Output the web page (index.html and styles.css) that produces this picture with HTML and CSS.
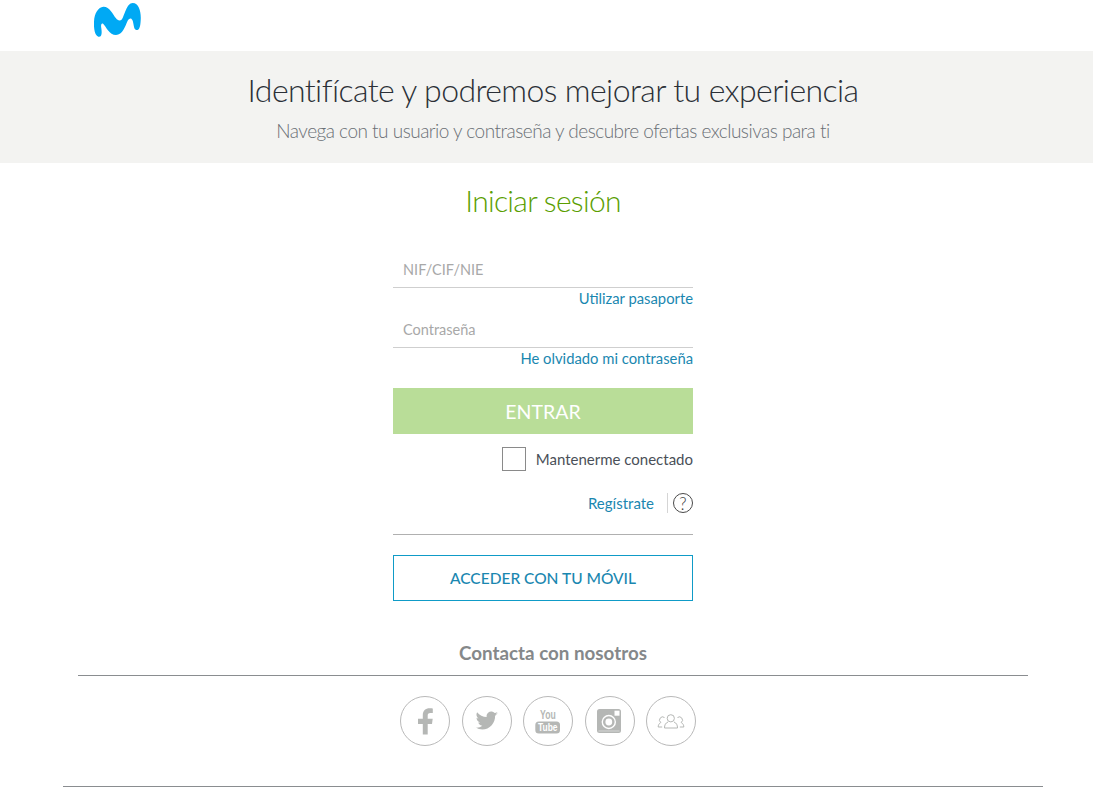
FILE: index.html
```html
<!DOCTYPE html>
<html lang="es">
<head>
<meta charset="utf-8">
<title>Iniciar sesión</title>
<link rel="stylesheet" href="styles.css">
</head>
<body>
<header class="topbar">
  <svg class="logo" viewBox="72 6 144 105" width="48" height="35" aria-hidden="true">
    <path d="M85 110C74 106 71 85 72 65C73 38 85 22 100 20C118 19 128 42 138 55C143 62 150 64 156 58C163 48 170 9 188 9C208 9 214 38 212 62C211 80 208 91 199 90C190 89 192 70 187 60C184 53 178 54 173 62C165 80 158 104 138 105C118 105 108 80 100 72C94 68 92 75 94 85C96 98 96 112 85 110Z" fill="#00a9f4"/>
  </svg>
</header>
<section class="banner">
  <h1 class="banner-title">Identifícate y podremos mejorar tu experiencia</h1>
  <p class="banner-sub">Navega con tu usuario y contraseña y descubre ofertas exclusivas para ti</p>
</section>
<main class="login">
  <h2 class="login-title">Iniciar sesión</h2>
  <form class="form">
    <input class="field" type="text" placeholder="NIF/CIF/NIE">
    <a class="link link-right" href="#">Utilizar pasaporte</a>
    <input class="field" type="password" placeholder="Contraseña">
    <a class="link link-right" href="#">He olvidado mi contraseña</a>
    <button class="submit" type="button">ENTRAR</button>
    <label class="keep">
      <span class="check"></span>
      <span>Mantenerme conectado</span>
    </label>
    <div class="register">
      <a class="link" href="#">Regístrate</a>
      <span class="help">?</span>
    </div>
    <hr class="divider">
    <a class="mobile" href="#">ACCEDER CON TU MÓVIL</a>
  </form>
</main>
<section class="contact">
  <h3 class="contact-title">Contacta con nosotros</h3>
  <div class="socials">
    <a class="social" href="#" aria-label="Facebook">
      <svg viewBox="0 0 50 50" width="50" height="50"><path transform="translate(.5 1.5)" d="M22.300 37V26.400H17.500V21.300h4.800v-3.600c0-4.600 2.700-6.900 6.800-6.900 1.500 0 2.900.1 3.200.2v4.600h-2.400c-2.200 0-2.700 1-2.700 2.600v3.100h5l-.7 5.100h-4.300V37z" fill="#b5b7b5"/></svg>
    </a>
    <a class="social" href="#" aria-label="Twitter">
      <svg viewBox="0 0 50 50" width="50" height="50"><path transform="translate(-1 1.200)" d="M37 16.500c-.9.400-1.700.6-2.600.7 1-.6 1.600-1.400 2-2.500-.9.500-1.800.9-2.800 1.100-1.800-1.900-4.600-2-6.500-.3-1.300 1.100-1.800 2.800-1.400 4.400-3.800-.2-7.200-2-9.600-4.900-1.300 2.100-.6 4.800 1.400 6.200-.7 0-1.400-.2-2-.6 0 2.200 1.500 4.100 3.700 4.600-.7.200-1.400.2-2 .1.600 1.800 2.300 3.100 4.200 3.200-1.900 1.500-4.300 2.100-6.700 1.900 5.200 3.300 12 2.300 16-2.300 2.400-2.700 3.500-6 3.400-9.500 1-.6 1.900-1.400 2.500-2.300z" fill="#b5b7b5"/></svg>
    </a>
    <a class="social" href="#" aria-label="YouTube">
      <svg viewBox="0 0 50 50" width="50" height="50">
        <text class="yt-you" x="17" y="23.300" textLength="15.700" lengthAdjust="spacingAndGlyphs">You</text>
        <rect x="12.300" y="25.500" width="24.700" height="12" rx="3.500" fill="#b5b7b5"/>
        <text class="yt-tube" x="15" y="35.300" textLength="19.500" lengthAdjust="spacingAndGlyphs">Tube</text>
      </svg>
    </a>
    <a class="social" href="#" aria-label="Instagram">
      <svg viewBox="0 0 50 50" width="50" height="50">
        <rect x="12" y="13" width="24" height="24" rx="2.500" fill="#b5b7b5"/>
        <rect x="29.500" y="14.700" width="5" height="5" fill="#fff"/>
        <circle cx="23.800" cy="26" r="7.200" fill="#fff"/>
        <circle cx="23.800" cy="26" r="5.800" fill="#b5b7b5"/>
        <circle cx="23.800" cy="26" r="3.400" fill="#fff"/>
        <path d="M13.500 35h21" stroke="#e0e0e0" stroke-width=".8"/>
      </svg>
    </a>
    <a class="social" href="#" aria-label="Comunidad">
      <svg viewBox="0 0 50 50" width="50" height="50" fill="none" stroke="#b5b7b5" stroke-width="1">
        <circle cx="24.800" cy="22.300" r="3.600"/>
        <path d="M18.500 32h13c0-3-1-5-3.500-6M18.500 32c0-3 1-5 3.500-6"/>
        <path d="M18.500 21.500a3 3 0 0 0-3.700 5c-2 1-2.600 3-2.600 4.500h4M31.500 21.500a3 3 0 0 1 3.700 5c2 1 2.600 3 2.600 4.500h-4"/>
      </svg>
    </a>
  </div>
</section>
<footer class="footer"></footer>
</body>
</html>
```
FILE: styles.css
```css
* { box-sizing: border-box; }
html, body { margin: 0; padding: 0; }
body {
  background: #fff;
  font-family: "Lato", "Liberation Sans", sans-serif;
  color: #4a4a4a;
  height: 803px;
  overflow: hidden;
}
.topbar { height: 51px; padding: 2px 0 0 94px; }
.logo { display: block; }
.banner {
  height: 112px;
  background: #f3f3f1;
  text-align: center;
  padding: 18px 0 0 13px;
}
.banner-title {
  margin: 0;
  font-size: 32px;
  line-height: 42px;
  font-weight: 300;
  letter-spacing: -0.6px;
  color: #2b3037;
}
.banner-sub {
  margin: 8px 0 0;
  font-size: 19px;
  line-height: 24px;
  font-weight: 300;
  letter-spacing: -0.5px;
  color: #6a6f75;
}
.login { width: 300px; margin: 0 0 0 393px; }
.login-title {
  margin: 0;
  padding-top: 19px;
  height: 87px;
  text-align: center;
  font-size: 30px;
  line-height: 36px;
  font-weight: 300;
  letter-spacing: -0.7px;
  color: #5a9e00;
}
.form { display: flex; flex-direction: column; }
.field {
  display: block;
  width: 100%;
  height: 38px;
  border: 0;
  border-bottom: 1px solid #cfcfcf;
  padding: 2px 10px 0;
  font: 14.5px "Lato", "Liberation Sans", sans-serif;
  color: #4a4a4a;
  background: transparent;
  outline: none;
}
.field::placeholder { color: #a8a8a8; opacity: 1; }
.link {
  color: #1a87b0;
  text-decoration: none;
  font-size: 14.8px;
  line-height: 20px;
}
.link-right { text-align: right; height: 22px; }
.submit {
  margin-top: 18px;
  height: 46px;
  border: 0;
  background: #b9dd98;
  color: #fff;
  font: 400 19.500px "Lato", "Liberation Sans", sans-serif;
  padding: 0;
}
.keep {
  display: flex;
  align-items: center;
  justify-content: flex-end;
  gap: 10px;
  margin-top: 13px;
  font-size: 15px;
  color: #4a5058;
}
.check {
  width: 24px;
  height: 24px;
  border: 1px solid #8a8a8a;
  background: #fff;
}
.register {
  display: flex;
  align-items: center;
  justify-content: flex-end;
  margin-top: 22px;
  height: 20px;
}
.register .link {
  font-size: 15px;
  padding-right: 13px;
  border-right: 1px solid #d5d5d5;
  height: 20px;
}
.help {
  display: flex;
  align-items: center;
  justify-content: center;
  width: 20px;
  height: 20px;
  margin-left: 5px;
  border: 1px solid #4a4a4a;
  border-radius: 50%;
  font-size: 17px;
  font-weight: 300;
  color: #3a3a3a;
}
.divider {
  margin: 21px 0 0;
  border: 0;
  border-top: 1px solid #b0b0b0;
  width: 100%;
}
.mobile {
  display: flex;
  align-items: center;
  justify-content: center;
  margin-top: 20px;
  height: 46px;
  border: 1px solid #0f9bc7;
  color: #1a87b0;
  text-decoration: none;
  font-size: 15.5px;
  font-weight: 500;
}
.contact { width: 950px; margin: 41px 0 0 78px; }
.contact-title {
  margin: 0;
  height: 34px;
  border-bottom: 1px solid #8a8d90;
  text-align: center;
  font-size: 18.8px;
  line-height: 22px;
  font-weight: 700;
  color: #85888a;
}
.socials {
  display: flex;
  justify-content: center;
  gap: 11.5px;
  margin-top: 20px;
  padding-right: 10px;
}
.social {
  display: flex;
  align-items: center;
  justify-content: center;
  width: 50px;
  height: 50px;
  border: 1px solid #b9b9b9;
  border-radius: 50%;
}
.social svg { display: block; flex: none; }
.yt-you { font: 700 13.500px "Liberation Sans", sans-serif; fill: #b5b7b5; }
.yt-tube { font: 700 11px "Liberation Sans", sans-serif; fill: #fff; }
.footer {
  width: 980px;
  margin: 40px 0 0 63px;
  border-top: 1px solid #8a8d90;
}
```
